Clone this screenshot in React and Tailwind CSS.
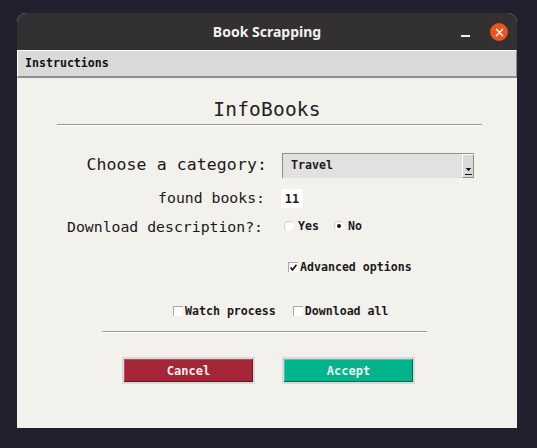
const mono = { fontFamily: '"DejaVu Sans Mono", "Liberation Mono", monospace' };

function Check({ checked = false }) {
  return (
    <span className="relative inline-block h-[10px] w-[10px] -translate-y-px border-t border-l border-[#a8a8a8] bg-white">
      {checked && (
        <svg viewBox="0 0 9 9" className="absolute left-0 top-0 h-[9px] w-[9px]">
          <path d="M1.5 4.5 L3.5 6.8 L7.5 1.8" fill="none" stroke="#1a1a1a" strokeWidth="1.7" />
        </svg>
      )}
    </span>
  );
}

function Radio({ checked = false }) {
  return (
    <span className="relative inline-flex h-[10px] w-[10px] -translate-y-px items-center justify-center rounded-full border border-[#cfcecb] border-b-white border-r-white bg-white">
      {checked && <span className="h-[4px] w-[4px] rounded-full bg-[#111]" />}
    </span>
  );
}

export default function App() {
  return (
    <div className="h-[448px] w-[537px] overflow-hidden bg-[#221f2e] pl-[17px] pt-[13px]">
      <div className="flex h-[415px] w-[500px] flex-col overflow-hidden rounded-t-[9px] bg-[#f2f1ec]">
        <div className="relative flex h-[37px] shrink-0 items-center justify-center bg-[#323030]">
          <span
            className="text-[14px] font-bold text-[#f4f1ee]"
            style={{ fontFamily: '"Noto Sans", "Open Sans", sans-serif' }}
          >
            Book Scrapping
          </span>
          <span className="absolute left-[444px] top-[22px] h-[1.5px] w-[9px] bg-[#f0f0f0]" />
          <span className="absolute left-[473px] top-[10px] flex h-[18px] w-[18px] items-center justify-center rounded-full bg-[#e95420]">
            <svg viewBox="0 0 10 10" className="h-[9px] w-[9px]">
              <path d="M1.5 1.5 L8.5 8.5 M8.5 1.5 L1.5 8.5" stroke="#fff" strokeWidth="1.6" strokeLinecap="round" />
            </svg>
          </span>
        </div>

        <div
          className="flex h-[28px] shrink-0 items-center border-t border-l border-white border-b-2 border-r border-b-[#8e8e8e] border-r-[#8e8e8e] bg-[#d9d9d9] pl-[7px] text-[11.6px] font-bold text-[#111]"
          style={mono}
        >
          Instructions
        </div>

        <div className="flex flex-col text-[#1a1a1a]" style={mono}>
          <div className="ml-[40px] mt-[20px] w-[425px] pr-[5px] text-center text-[19.5px] leading-[24px] tracking-[0.2px] text-[#222]">
            InfoBooks
          </div>
          <div className="ml-[40px] mt-[2px] w-[425px]">
            <div className="h-px bg-[#9a9a9a]" />
            <div className="h-px bg-white" />
          </div>

          <div className="mt-[27px] flex h-[25px] items-center">
            <span className="w-[251px] pr-[1px] text-right text-[16.5px] tracking-[0.1px]">Choose a category:</span>
            <div className="ml-[14px] flex h-[25px] w-[192px] border-t border-l border-[#8f8f8f] border-b-white border-r-white bg-[#e3e1df]">
              <span className="flex flex-1 items-center pl-[8px] text-[11.6px] font-bold">Travel</span>
              <div className="relative w-[12px] border-l border-t border-white border-b border-r border-b-[#8a8a8a] border-r-[#8a8a8a] bg-[#d9d9d9]">
                <svg viewBox="0 0 8 6" className="absolute left-[2px] bottom-[5px] h-[4px] w-[7px]">
                  <path d="M0 0 H8 L4 5 Z" fill="#111" />
                </svg>
                <span className="absolute bottom-[2px] left-[2px] h-px w-[7px] bg-[#111]" />
              </div>
            </div>
          </div>

          <div className="mt-[11px] flex h-[19px] items-center">
            <span className="w-[248px] text-right text-[14.8px]">found books:</span>
            <span className="ml-[16px] flex h-[19px] w-[22px] items-center justify-center bg-white text-[12px] font-bold">11</span>
          </div>

          <div className="mt-[9px] flex h-[20px] items-center">
            <span className="w-[246px] text-right text-[14.8px]">Download description?:</span>
            <div className="ml-[21px] flex items-center text-[11.6px] font-bold">
              <Radio />
              <span className="ml-[4px]">Yes</span>
              <span className="ml-[15px] flex"><Radio checked /></span>
              <span className="ml-[4px]">No</span>
            </div>
          </div>

          <div className="mt-[21px] flex h-[20px] items-center pl-[271px] text-[11.6px] font-bold">
            <Check checked />
            <span className="ml-[2px]">Advanced options</span>
          </div>

          <div className="mt-[24px] flex h-[20px] items-center pl-[156px] text-[11.6px] font-bold">
            <Check />
            <span className="ml-[2px]">Watch process</span>
            <span className="ml-[17px] flex"><Check /></span>
            <span className="ml-[2px]">Download all</span>
          </div>

          <div className="ml-[85px] mt-[9px] w-[325px]">
            <div className="h-px bg-[#9a9a9a]" />
            <div className="h-px bg-white" />
          </div>

          <div className="mt-[24px] flex gap-[27px] pl-[105px]">
            <button className="flex h-[27px] w-[133px] items-center justify-center border-2 border-[#d9d9d9] bg-[#a52737] text-[12px] font-bold text-[#f4f1ec] shadow-[inset_-1px_-1px_0_#6b1420,inset_1px_1px_0_#c44a58]">
              Cancel
            </button>
            <button className="flex h-[27px] w-[133px] items-center justify-center border-2 border-[#d9d9d9] bg-[#02b48b] text-[12px] font-bold text-[#f4f1ec] shadow-[inset_-1px_-1px_0_#036b53,inset_1px_1px_0_#3cd0ab]">
              Accept
            </button>
          </div>
        </div>
      </div>
    </div>
  );
}
